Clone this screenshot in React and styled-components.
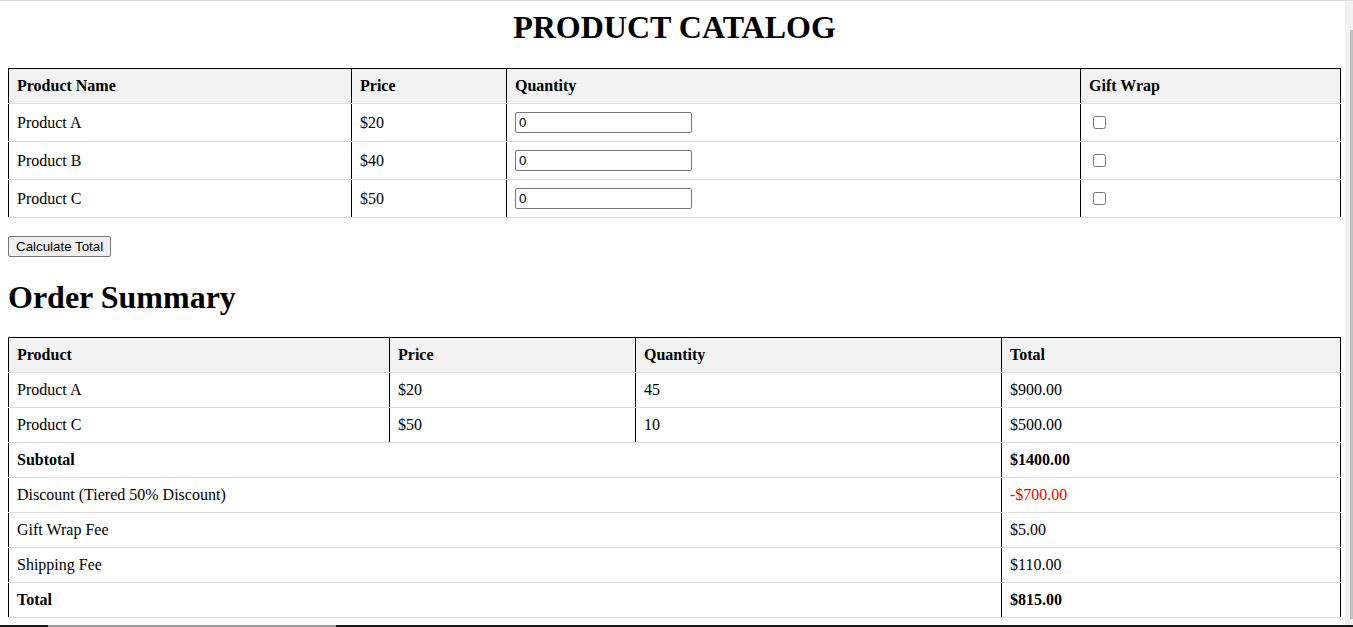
import { useState } from 'react';
import styled, { createGlobalStyle } from 'styled-components';

const GlobalStyle = createGlobalStyle`
  html, body {
    margin: 0;
    padding: 0;
    height: 100%;
    overflow: hidden;
    background: #fff;
  }

  body {
    font-family: "Liberation Serif", "Times New Roman", serif;
    font-size: 16px;
    color: #000;
  }
`;

const Frame = styled.div`
  height: 627px;
  display: flex;
  flex-direction: column;
  border-top: 1px solid #dedede;
  box-sizing: border-box;
`;

const Body = styled.div`
  flex: 1;
  min-height: 0;
  display: flex;
`;

const Page = styled.div`
  flex: 1;
  overflow: hidden;
  padding: 0 4px 0 8px;
`;

const ScrollTrack = styled.div`
  width: 8px;
  background: #f1f1f1;
  display: flex;
  justify-content: flex-end;
  padding-top: 29px;
  padding-bottom: 6px;
  box-sizing: border-box;
`;

const ScrollThumb = styled.div`
  width: 3px;
  background: #c1c1c1;
`;

const BottomEdge = styled.div`
  height: 2px;
  display: flex;
`;

const EdgePart = styled.span`
  background: ${(p) => p.color};
  flex: ${(p) => p.grow};
`;

const Title = styled.h1`
  margin: 8px 0 22px;
  font-size: 32px;
  line-height: 37px;
  font-weight: bold;
  text-align: center;
`;

const Heading = styled.h2`
  margin: 22px 0 21px;
  font-size: 32px;
  line-height: 37px;
  font-weight: bold;
`;

const Table = styled.table`
  width: 1332px;
  border-collapse: collapse;
  table-layout: fixed;
  margin-bottom: ${(p) => p.gap || 0}px;

  th,
  td {
    border-left: 1px solid #000;
    border-right: 1px solid #000;
    border-bottom: 1px solid #ddd;
    padding: 8px;
    text-align: left;
    vertical-align: middle;
    line-height: 18px;
  }

  th {
    border-top: 1px solid #000;
    background: #f2f2f2;
    font-weight: bold;
  }
`;

const Cell = styled.td`
  font-weight: ${(p) => (p.$bold ? 'bold' : 'normal')};
  color: ${(p) => (p.$negative ? '#ff0000' : '#000')};
`;

const QtyInput = styled.input`
  box-sizing: border-box;
  width: 177px;
  height: 21px;
  margin: 0;
  padding: 1px 3px;
  border: 1px solid #767676;
  border-radius: 2px;
  font-family: "Liberation Sans", Arial, sans-serif;
  font-size: 13.33px;
  color: #000;
  display: block;
`;

const GiftBox = styled.input`
  width: 13px;
  height: 13px;
  margin: 3px 3px 3px 4px;
  display: block;
`;

const Button = styled.button`
  display: block;
  height: 21px;
  padding: 1px 7px;
  border: 1px solid #767676;
  border-radius: 2px;
  background: #efefef;
  font-family: "Liberation Sans", Arial, sans-serif;
  font-size: 13.33px;
  color: #000;
`;

const products = [
  { name: 'Product A', price: 20 },
  { name: 'Product B', price: 40 },
  { name: 'Product C', price: 50 },
];

const orderLines = [
  { name: 'Product A', price: '$20', qty: 45, total: '$900.00' },
  { name: 'Product C', price: '$50', qty: 10, total: '$500.00' },
];

const summaryLines = [
  { label: 'Subtotal', value: '$1400.00', bold: true },
  { label: 'Discount (Tiered 50% Discount)', value: '-$700.00', negative: true },
  { label: 'Gift Wrap Fee', value: '$5.00' },
  { label: 'Shipping Fee', value: '$110.00' },
  { label: 'Total', value: '$815.00', bold: true },
];

const App = () => {
  const [qty, setQty] = useState(products.map(() => '0'));
  const [wrap, setWrap] = useState(products.map(() => false));

  return (
    <Frame>
      <GlobalStyle />
      <Body>
        <Page>
          <Title>PRODUCT CATALOG</Title>
          <Table gap={18}>
            <colgroup>
              <col style={{ width: 343 }} />
              <col style={{ width: 155 }} />
              <col style={{ width: 574 }} />
              <col style={{ width: 260 }} />
            </colgroup>
            <thead>
              <tr>
                <th>Product Name</th>
                <th>Price</th>
                <th>Quantity</th>
                <th>Gift Wrap</th>
              </tr>
            </thead>
            <tbody>
              {products.map((p, i) => (
                <tr key={p.name}>
                  <Cell>{p.name}</Cell>
                  <Cell>${p.price}</Cell>
                  <Cell>
                    <QtyInput
                      type="text"
                      value={qty[i]}
                      onChange={(e) =>
                        setQty(qty.map((q, j) => (j === i ? e.target.value : q)))
                      }
                    />
                  </Cell>
                  <Cell>
                    <GiftBox
                      type="checkbox"
                      checked={wrap[i]}
                      onChange={() =>
                        setWrap(wrap.map((w, j) => (j === i ? !w : w)))
                      }
                    />
                  </Cell>
                </tr>
              ))}
            </tbody>
          </Table>
          <Button>Calculate Total</Button>
          <Heading>Order Summary</Heading>
          <Table>
            <colgroup>
              <col style={{ width: 381 }} />
              <col style={{ width: 246 }} />
              <col style={{ width: 366 }} />
              <col style={{ width: 339 }} />
            </colgroup>
            <thead>
              <tr>
                <th>Product</th>
                <th>Price</th>
                <th>Quantity</th>
                <th>Total</th>
              </tr>
            </thead>
            <tbody>
              {orderLines.map((l) => (
                <tr key={l.name}>
                  <Cell>{l.name}</Cell>
                  <Cell>{l.price}</Cell>
                  <Cell>{l.qty}</Cell>
                  <Cell>{l.total}</Cell>
                </tr>
              ))}
              {summaryLines.map((s) => (
                <tr key={s.label}>
                  <Cell colSpan={3} $bold={s.bold}>
                    {s.label}
                  </Cell>
                  <Cell $bold={s.bold} $negative={s.negative}>
                    {s.value}
                  </Cell>
                </tr>
              ))}
            </tbody>
          </Table>
        </Page>
        <ScrollTrack>
          <ScrollThumb />
        </ScrollTrack>
      </Body>
      <BottomEdge>
        <EdgePart color="#1a1a1a" grow={48} />
        <EdgePart color="#9a9a9a" grow={288} />
        <EdgePart color="#1a1a1a" grow={1017} />
      </BottomEdge>
    </Frame>
  );
};

export default App;
